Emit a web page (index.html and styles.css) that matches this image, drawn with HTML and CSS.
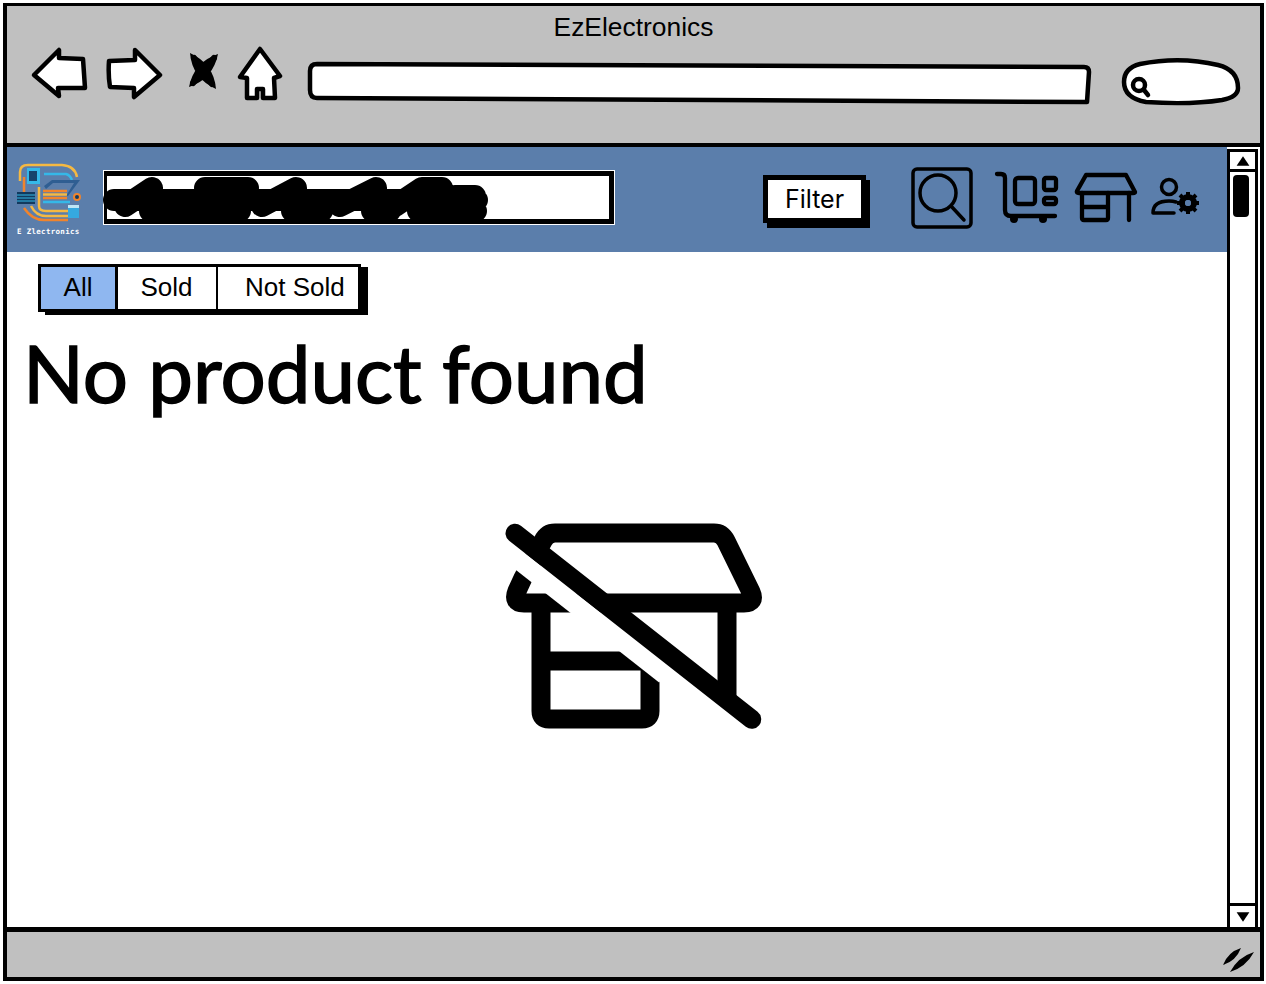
FILE: index.html
```html
<!DOCTYPE html>
<html lang="en">
<head>
<meta charset="utf-8">
<title>EzElectronics</title>
<link rel="stylesheet" href="styles.css">
</head>
<body>
<div class="frame">
  <header class="chrome">
    <div class="title">EzElectronics</div>
    <div class="nav">
      <svg class="nav-icon back" viewBox="30 46 58 60"><path class="sk" d="M34 75 L59 50 L59 58 L83 59 L85 88 L58 88 L59 96 Z"/></svg>
      <svg class="nav-icon forward" viewBox="106 46 57 60"><path class="sk" d="M109 61 L135 60 L135 50 L160 75 L134 97 L134 88 L110 87 Q108 75 109 61 Z"/></svg>
      <svg class="nav-icon stop" viewBox="187 46 32 60">
        <path class="fill-black" d="M190 53 Q214 64 216 89 Q192 78 190 53 Z M218 54 Q213 79 189 87 Q194 62 218 54 Z"/>
        <path class="x-core" d="M194 58 L212 84 M214 58 L193 83"/>
      </svg>
      <svg class="nav-icon home" viewBox="237 46 46 60"><path class="sk" d="M260 49 L280 76 L274 78 L275 98 L263 98 L263 89 L257 89 L257 98 L247 98 L247 78 L240 77 Z"/></svg>
      <svg class="nav-icon addr" viewBox="307 46 785 60"><path class="sk" d="M317 64 L1084 67 Q1089 67 1089 72 L1087 102 L317 98 Q310 98 310 90 L310 71 Q310 64 317 64 Z"/></svg>
      <svg class="nav-icon pill" viewBox="1120 46 122 60">
        <path class="sk" d="M1124 82 Q1124 68 1140 64 Q1180 56 1218 65 Q1238 70 1238 88 Q1238 97 1222 100 Q1190 105 1146 102 Q1124 98 1124 82 Z"/>
        <circle class="mag" cx="1139" cy="85" r="6"/>
        <path class="mag" d="M1144 90 L1148 95"/>
      </svg>
    </div>
  </header>
  <div class="body-row">
    <main class="content">
      <div class="topbar">
        <svg class="logo" viewBox="14 160 68 78">
          <path class="lg" stroke="#f5b942" d="M20 181 V172 Q20 165 28 165 H62 Q75 166 77 177"/>
          <path class="lg" stroke="#35b8e8" d="M44 174 H66 Q70 175 72 180"/>
          <rect x="27" y="168" width="13" height="16" fill="#35b8e8"/>
          <rect x="29" y="171" width="8" height="10" fill="#17436b"/>
          <path class="lg" stroke="#f0842c" d="M24 177 V196"/>
          <path class="lg" stroke="#f5b942" d="M39 187 V206 Q39 211 46 211 H68"/>
          <path class="lg" stroke="#f0842c" d="M24 208 Q32 220 44 220 H68"/>
          <path class="lg" stroke="#f5b942" d="M31 206 Q36 216 46 216 H68"/>
          <rect x="17" y="192" width="18" height="12" fill="#123a5f"/>
          <path class="lg-thin" stroke="#35b8e8" d="M17 195 H35 M17 198 H35 M17 201 H35"/>
          <path fill="#2f5e92" d="M44 186 L52 180 H80 L68 196 H66 L74 183 H53 L46 189 Z"/>
          <path class="lg" stroke="#f0842c" d="M43 191 H67 M43 198 H67"/>
          <path class="lg" stroke="#f5b942" d="M43 194.500 H67"/>
          <path class="lg" stroke="#35b8e8" d="M43 202 H70"/>
          <circle cx="77" cy="197" r="3" fill="#123a5f" stroke="#f0842c" stroke-width="2"/>
          <rect x="68" y="205" width="11" height="13" fill="#35a9e0"/>
          <rect x="68" y="205" width="11" height="3" fill="#bfe6f5"/>
          <text class="logo-text" x="17" y="234">E Zlectronics</text>
        </svg>
        <div class="scribble-field">
          <svg class="scribble" viewBox="100 170 395 58"><path d="M114 199 H477 M125 205 L152 187 M205 187 H248 M262 205 L296 187 M340 205 L376 187 M395 205 L422 187 H442 M455 195 L475 195 M150 210 H240 M292 210 H322 M372 210 H390 M418 210 H476"/></svg>
        </div>
        <div class="filter">Filter</div>
        <svg class="tool lens" viewBox="911 160 62 78">
          <rect class="ln-thin" x="913" y="169" width="58" height="58" rx="4"/>
          <circle class="ln-thin" cx="938" cy="193" r="18"/>
          <path class="ln-thin" d="M951 206 L964 220"/>
        </svg>
        <svg class="tool cart" viewBox="993 160 66 78">
          <path class="ln" d="M997 174 H1001 Q1005 174 1005 178 V210 Q1005 216 1011 216 H1055"/>
          <rect class="ln" x="1015" y="178" width="20" height="26" rx="3"/>
          <rect class="ln" x="1044" y="178" width="12" height="12" rx="2"/>
          <rect class="ln" x="1044" y="198" width="12" height="6" rx="2"/>
          <circle class="fill-black" cx="1014" cy="219" r="4"/>
          <circle class="fill-black" cx="1043" cy="219" r="4"/>
        </svg>
        <svg class="tool store" viewBox="1073 160 66 78">
          <path class="ln" d="M1086 175 H1126 L1135 192 Q1135 193 1133 193 H1079 Q1076 193 1077 191 Z"/>
          <path class="ln" d="M1082 193 V218 Q1082 220 1084 220 H1106 Q1108 220 1108 218 V193 M1082 207 H1108 M1129 193 V220"/>
        </svg>
        <svg class="tool person" viewBox="1150 160 50 78">
          <circle class="ln-thin" cx="1169" cy="187" r="7.500"/>
          <path class="ln-thin" d="M1153 213 Q1153 201 1169 201 Q1173 201 1176 202 M1153 213 H1174"/>
          <circle class="gear" cx="1188" cy="203" r="6"/>
          <path class="gear-teeth" d="M1188 192 V214 M1177 203 H1199 M1180 195 L1196 211 M1196 195 L1180 211"/>
          <circle class="gear-hole" cx="1188" cy="203" r="3"/>
        </svg>
      </div>
      <div class="tabs">
        <div class="tab tab-all">All</div>
        <div class="tab tab-sold">Sold</div>
        <div class="tab tab-not">Not Sold</div>
      </div>
      <h1 class="empty-title">No product found</h1>
      <svg class="empty-icon" viewBox="490 510 290 230">
        <path class="big" d="M523 578 L517 591 Q512 603 524 603 H744 Q756 603 751 592 L726 541 Q722 533 714 533 H555 Q547 533 543 541 Z"/>
        <path class="big" d="M541 603 V711 Q541 719 549 719 H642 Q650 719 650 711 V670 M541 661 H650 M727 603 V698"/>
        <path class="big-cut" d="M500 545.500 L665 675"/>
        <path class="big-slash" d="M515 533.300 L751.700 719.300"/>
      </svg>
    </main>
    <aside class="scrollbar">
      <div class="sb-btn sb-up"><svg viewBox="0 0 20 14"><path d="M10 1 L18 13 H2 Z"/></svg></div>
      <div class="sb-track"><div class="sb-thumb"></div></div>
      <div class="sb-btn sb-down"><svg viewBox="0 0 20 14"><path d="M2 1 H18 L10 13 Z"/></svg></div>
    </aside>
  </div>
  <footer class="status">
    <svg class="grip" viewBox="1218 940 40 36"><path d="M1223 964 Q1236 960 1241 947 Q1228 951 1223 964 Z M1230 971 Q1246 966 1254 951 Q1238 956 1230 971 Z"/></svg>
  </footer>
</div>
</body>
</html>
```
FILE: styles.css
```css
* { box-sizing: border-box; }
html, body { margin: 0; padding: 0; }
body {
  width: 1266px;
  height: 984px;
  padding: 3px 2px 3px 3px;
  background: #fff;
  overflow: hidden;
  font-family: "Liberation Sans", Arial, sans-serif;
  color: #000;
}
.frame {
  height: 978px;
  border: 4px solid #000;
  border-top-width: 3px;
  display: flex;
  flex-direction: column;
  background: #fff;
}

/* Browser chrome */
.chrome {
  height: 141px;
  flex: none;
  background: #c0c0c0;
  border-bottom: 4px solid #000;
}
.title {
  height: 40px;
  padding-top: 3px;
  text-align: center;
  font-size: 26.400px;
  line-height: 36px;
}
.nav {
  display: flex;
  padding-left: 23px;
}
.nav-icon { height: 60px; flex: none; }
.back { width: 58px; }
.forward { width: 57px; margin-left: 18px; }
.stop { width: 32px; margin-left: 24px; }
.home { width: 46px; margin-left: 18px; }
.addr { width: 785px; margin-left: 24px; }
.pill { width: 122px; margin-left: 28px; }
.sk { fill: #fff; stroke: #000; stroke-width: 4.500; stroke-linejoin: round; }
.mag { fill: none; stroke: #000; stroke-width: 4.500; stroke-linecap: round; }
.fill-black { fill: #000; }
.x-core { fill: none; stroke: #000; stroke-width: 6; stroke-linecap: round; }
.ln { fill: none; stroke: #000; stroke-width: 4.300; stroke-linecap: round; stroke-linejoin: round; }
.ln-thin { fill: none; stroke: #000; stroke-width: 3.500; stroke-linecap: round; stroke-linejoin: round; }

/* Body */
.body-row { flex: 1; display: flex; min-height: 0; }
.content { flex: 1; min-width: 0; }
.topbar {
  height: 105px;
  padding: 0 0 1px 7px;
  background: #5b7eab;
  display: flex;
  align-items: center;
}
.logo { width: 68px; height: 78px; flex: none; }
.lg { fill: none; stroke-width: 2.500; }
.lg-thin { fill: none; stroke-width: 1; }
.logo-text { fill: #fff; font-family: "DejaVu Sans Mono", monospace; font-size: 7.500px; font-weight: 700; letter-spacing: 0.300px; }
.scribble-field {
  width: 510px;
  height: 53px;
  margin-left: 22px;
  margin-bottom: 4px;
  flex: none;
  position: relative;
  background: #fff;
  border: 5px solid #000;
  border-left-width: 3px;
  outline: 1px solid #fff;
}
.scribble {
  position: absolute;
  left: -7px;
  top: -5px;
  width: 395px;
  height: 58px;
  overflow: visible;
}
.scribble path { fill: none; stroke: #000; stroke-width: 22; stroke-linecap: round; stroke-linejoin: round; }
.filter {
  width: 103px;
  height: 48px;
  margin-left: 149px;
  flex: none;
  background: #fff;
  border: 5px solid #000;
  box-shadow: 4px 5px 0 #000;
  text-align: center;
  font-family: Inter, sans-serif;
  font-size: 25px;
  line-height: 38px;
}
.tool { height: 78px; flex: none; }
.lens { width: 62px; margin-left: 45px; }
.cart { width: 66px; margin-left: 20px; }
.store { width: 66px; margin-left: 14px; }
.person { width: 50px; margin-left: 11px; }
.gear { fill: none; stroke: #000; stroke-width: 6; }
.gear-teeth { stroke: #000; stroke-width: 4; fill: none; stroke-dasharray: 4 14 4 0; }
.gear-hole { fill: #5b7eab; }

.tabs {
  display: flex;
  width: 323px;
  height: 48px;
  margin: 12px 0 0 31px;
  border: 3px solid #000;
  box-shadow: 7px 3px 0 #000;
  background: #000;
  gap: 2.500px;
  font-size: 26px;
  line-height: 41px;
}
.tab { background: #fff; height: 42px; text-align: center; }
.tab-all { width: 74px; background: #8fb7f0; }
.tab-sold { width: 98px; }
.tab-not { flex: 1; text-align: left; padding-left: 27px; }

.empty-title {
  margin: 14px 0 0 16px;
  font-family: Lato, sans-serif;
  font-size: 79.800px;
  font-weight: 400;
  -webkit-text-stroke: 1.500px #000;
  line-height: 92px;
}
.empty-icon { display: block; width: 290px; height: 230px; margin: 92px 0 0 483px; }
.big { fill: none; stroke: #000; stroke-width: 19; stroke-linejoin: round; }
.big-cut { fill: none; stroke: #fff; stroke-width: 19; }
.big-slash { fill: none; stroke: #000; stroke-width: 19; stroke-linecap: round; }

/* Scrollbar */
.scrollbar {
  width: 31px;
  margin: 2px 2px 0 0;
  flex: none;
  display: flex;
  flex-direction: column;
  border: 3.500px solid #000;
  border-bottom: 0;
  background: #fff;
}
.sb-btn { height: 20px; flex: none; display: flex; align-items: center; justify-content: center; }
.sb-btn svg { width: 16px; height: 12px; }
.sb-up { border-bottom: 3px solid #000; }
.sb-down { border-top: 3px solid #000; height: 24px; }
.sb-track { flex: 1; padding: 3px 0 0 3px; }
.sb-thumb { width: 16px; height: 42px; background: #000; border-radius: 4px; }

/* Status */
.status {
  flex: none;
  height: 50px;
  border-top: 5px solid #000;
  background: #c0c0c0;
  display: flex;
  justify-content: flex-end;
  align-items: flex-end;
}
.grip { width: 40px; height: 36px; margin-right: 2px; }
```
